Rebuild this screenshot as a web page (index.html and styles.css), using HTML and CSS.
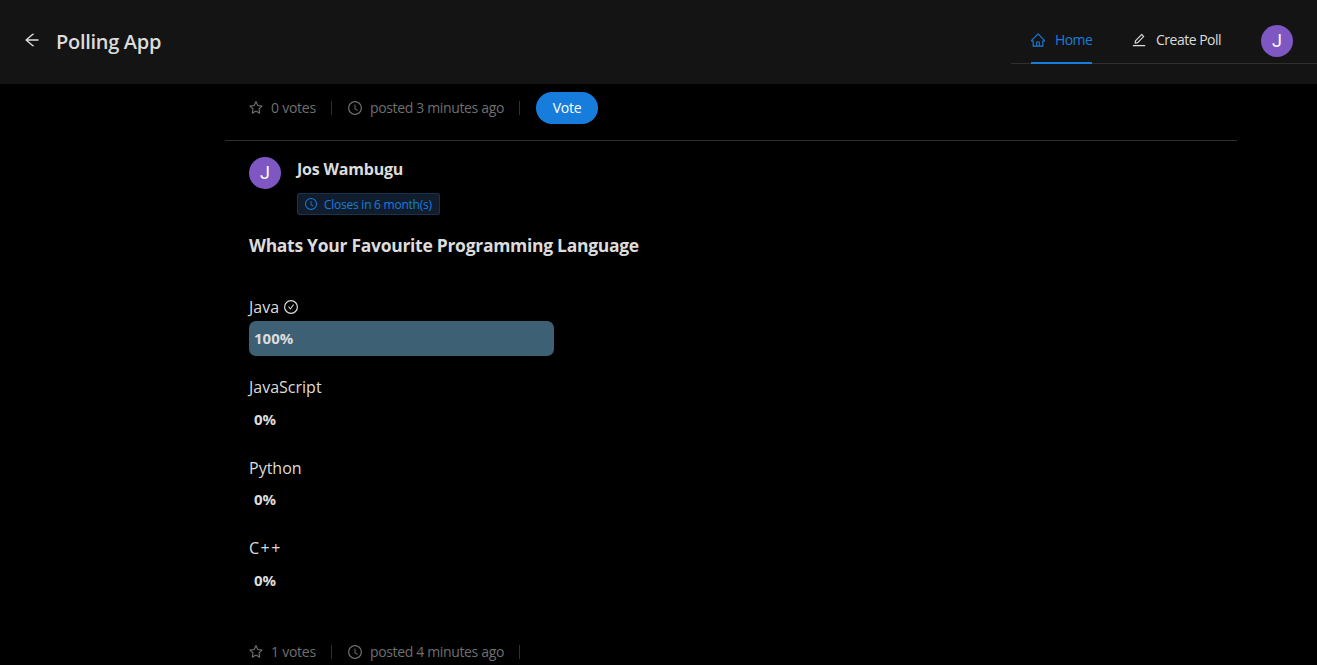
FILE: index.html
```html
<!DOCTYPE html>
<html lang="en">
<head>
<meta charset="utf-8">
<title>Polling App</title>
<link rel="stylesheet" href="styles.css">
</head>
<body>
<svg class="sprite" aria-hidden="true">
  <symbol id="arrow" viewBox="64 64 896 896"><path d="M872 474H286.9l350.2-304c5.6-4.9 2.2-14-5.2-14h-88.5c-3.9 0-7.6 1.4-10.5 3.9L155 487.8a31.96 31.96 0 000 48.3L535.1 866c1.5 1.3 3.3 2 5.2 2h91.5c7.4 0 10.8-9.2 5.2-14L286.9 550H872c4.4 0 8-3.6 8-8v-60c0-4.4-3.6-8-8-8z"/></symbol>
  <symbol id="home" viewBox="64 64 896 896"><path d="M946.5 505L560.1 118.8l-25.9-25.9a31.5 31.5 0 00-44.4 0L77.5 505a63.9 63.9 0 00-18.8 46c.4 35.2 29.7 63.3 64.9 63.3h42.5V940h691.8V614.3h43.4c17.1 0 33.2-6.7 45.3-18.8a63.6 63.6 0 0018.7-45.3c0-17-6.7-33.1-18.8-45.2zM568 868H456V664h112v204zm217.9-325.7V868H632V640c0-22.1-17.9-40-40-40H432c-22.1 0-40 17.9-40 40v228H238.1V542.3h-96l370-369.7 23.1 23.1L882 542.3h-96.1z"/></symbol>
  <symbol id="edit" viewBox="64 64 896 896"><path d="M257.7 752c2 0 4-.2 6-.5L431.9 722c2-.4 3.9-1.3 5.3-2.8l423.9-423.9a9.96 9.96 0 000-14.1L694.9 114.9c-1.9-1.9-4.4-2.9-7.1-2.9s-5.2 1-7.1 2.9L256.8 538.8c-1.5 1.5-2.4 3.3-2.8 5.3l-29.5 168.2a33.5 33.5 0 009.4 29.8c6.6 6.4 14.9 9.9 23.8 9.9zm67.4-174.4L687.8 215l73.3 73.3-362.7 362.6-88.9 15.7 15.6-89zM880 836H144c-17.7 0-32 14.3-32 32v36c0 4.4 3.6 8 8 8h784c4.4 0 8-3.6 8-8v-36c0-17.7-14.3-32-32-32z"/></symbol>
  <symbol id="star" viewBox="64 64 896 896"><path d="M908.1 353.1l-253.9-36.9L540.7 86.1c-3.1-6.3-8.2-11.4-14.5-14.5-15.8-7.8-35-1.3-42.9 14.5L369.8 316.2l-253.9 36.9c-7 1-13.4 4.3-18.3 9.3a32.05 32.05 0 00.6 45.3l183.7 179.1-43.4 252.9a31.95 31.95 0 0046.4 33.7L512 754l227.1 119.4c6.2 3.3 13.4 4.4 20.3 3.2 17.4-3 29.1-19.5 26.1-36.9l-43.4-252.9 183.7-179.1c5-4.9 8.3-11.3 9.3-18.3 2.7-17.5-9.5-33.7-27-36.3zM664.8 561.6l36.1 210.3L512 672.7 323.1 772l36.1-210.3-152.8-149L417.6 382 512 190.7 606.4 382l211.2 30.7-152.8 148.9z"/></symbol>
  <symbol id="clock" viewBox="64 64 896 896"><circle class="ring" cx="512" cy="512" r="410"/><path d="M686.7 638.6L544.1 535.5V288c0-4.4-3.6-8-8-8H488c-4.4 0-8 3.6-8 8v275.4c0 2.6 1.2 5 3.3 6.5l165.4 120.6c3.6 2.6 8.6 1.8 11.2-1.7l28.6-39c2.6-3.7 1.8-8.7-1.8-11.2z"/></symbol>
  <symbol id="check" viewBox="64 64 896 896"><circle class="ring" cx="512" cy="512" r="410"/><path d="M699 353h-46.9c-10.2 0-19.9 4.9-25.9 13.3L469 584.3l-71.2-98.8c-6-8.3-15.6-13.3-25.9-13.3H325c-6.5 0-10.3 7.4-6.5 12.7l124.6 172.8a31.8 31.8 0 0051.7 0l210.6-292c3.9-5.3.1-12.7-6.4-12.7z"/></symbol>
</svg>

<header class="header">
  <svg class="icon back"><use href="#arrow"/></svg>
  <h1 class="brand">Polling App</h1>
  <nav class="nav">
    <a class="nav-item home active"><svg class="icon"><use href="#home"/></svg><span class="home-label">Home</span></a>
    <a class="nav-item create"><svg class="icon"><use href="#edit"/></svg><span class="create-label">Create Poll</span></a>
    <span class="avatar nav-avatar">J</span>
  </nav>
</header>

<main class="list">
  <article class="poll first">
    <footer class="actions">
      <span class="action votes"><svg class="icon"><use href="#star"/></svg><span class="votes-label">0 votes</span></span>
      <span class="action posted"><svg class="icon"><use href="#clock"/></svg><span class="posted-label">posted 3 minutes ago</span></span>
      <button class="vote">Vote</button>
    </footer>
  </article>
  <article class="poll">
    <div class="meta">
      <span class="avatar">J</span>
      <div class="author">
        <h4 class="name">Jos Wambugu</h4>
        <span class="tag"><svg class="icon small"><use href="#clock"/></svg><span class="tag-label">Closes in 6 month(s)</span></span>
      </div>
    </div>
    <h3 class="question">Whats Your Favourite Programming Language</h3>
    <section class="choices">
      <div class="choice">
        <div class="choice-name"><span>Java</span><svg class="icon"><use href="#check"/></svg></div>
        <div class="bar winner" style="width: 100%"><span>100%</span></div>
      </div>
      <div class="choice">
        <div class="choice-name"><span>JavaScript</span></div>
        <div class="bar"><span>0%</span></div>
      </div>
      <div class="choice">
        <div class="choice-name"><span>Python</span></div>
        <div class="bar"><span>0%</span></div>
      </div>
      <div class="choice">
        <div class="choice-name"><span class="cpp">C++</span></div>
        <div class="bar"><span>0%</span></div>
      </div>
    </section>
    <footer class="actions">
      <span class="action votes"><svg class="icon"><use href="#star"/></svg><span class="votes-label">1 votes</span></span>
      <span class="action posted"><svg class="icon"><use href="#clock"/></svg><span class="posted-label">posted 4 minutes ago</span></span>
    </footer>
  </article>
</main>
</body>
</html>
```
FILE: styles.css
```css
* { box-sizing: border-box; }
body {
  margin: 0;
  height: 665px;
  overflow: hidden;
  background: #000;
  color: #dcdcdc;
  font: 14px/22px "Open Sans", "Noto Sans", sans-serif;
}
h1, h3, h4 { margin: 0; }
.sprite { display: none; }
.icon { width: 14px; height: 14px; flex: none; fill: currentColor; }
.icon.small { width: 12px; height: 12px; }
.ring { fill: none; stroke: currentColor; stroke-width: 76; }

.header {
  display: flex;
  align-items: flex-start;
  height: 84px;
  padding-left: 24px;
  background: #141414;
}
.icon.back { width: 16px; height: 16px; margin-top: 32px; }
.brand {
  margin: 26px 0 0 16px;
  font-size: 20px;
  line-height: 32px;
  font-weight: 600;
  letter-spacing: -0.3px;
}
.nav {
  display: flex;
  gap: 40px;
  width: 306px;
  height: 64px;
  margin-left: auto;
  padding-left: 20px;
  border-bottom: 1px solid #303030;
}
.nav-item {
  display: flex;
  align-items: center;
  gap: 10px;
  height: 64px;
  padding-top: 16px;
  border-bottom: 2px solid transparent;
}
.nav-item.home { width: 61px; }
.nav-item.create { width: 90px; }
.nav-item .icon { margin-top: 1px; }
.nav-item span { padding-top: 2px; }
.home-label { letter-spacing: -0.6px; }
.create-label { letter-spacing: -0.5px; }
.nav-item.active { color: #177ddc; border-color: #177ddc; }
.avatar {
  display: flex;
  align-items: center;
  justify-content: center;
  width: 32px;
  height: 32px;
  flex: none;
  border-radius: 50%;
  background: #7e57c2;
  color: #fff;
  font-family: Roboto, sans-serif;
  font-size: 18px;
}
.nav-avatar { margin-top: 25px; margin-left: -1px; }

.list { width: 1012px; margin-left: 225px; }
.poll { padding: 16px 24px; }
.poll.first { padding-top: 8px; border-bottom: 1px solid #303030; }
.actions {
  display: flex;
  align-items: center;
  height: 32px;
  color: #6f6f6f;
}
.action {
  display: flex;
  align-items: center;
  gap: 8px;
}
.action::after {
  content: "";
  width: 1px;
  height: 14px;
  margin-left: auto;
  background: #303030;
}
.votes { width: 83px; }
.votes-label { letter-spacing: -0.25px; }
.posted { width: 172px; margin-left: 16px; }
.posted-label { letter-spacing: -0.35px; }
.vote {
  width: 62px;
  height: 32px;
  margin-left: 16px;
  padding: 0;
  border: 0;
  border-radius: 16px;
  background: #177ddc;
  color: #fff;
  font: inherit;
  letter-spacing: -0.3px;
}
.meta { display: flex; gap: 16px; height: 58px; }
.name {
  height: 36px;
  font-size: 16px;
  line-height: 25px;
  font-weight: 700;
  letter-spacing: -0.2px;
}
.tag {
  display: flex;
  align-items: center;
  gap: 7px;
  width: 143px;
  height: 22px;
  padding-left: 7px;
  border: 1px solid #153450;
  border-radius: 2px;
  background: #111d2c;
  color: #177ddc;
  font-size: 12px;
  line-height: 20px;
}
.tag-label { padding-top: 2px; letter-spacing: -0.25px; }
.question {
  margin-top: 16px;
  font-size: 17.5px;
  line-height: 28px;
  font-weight: 700;
  letter-spacing: -0.29px;
}
.choices { width: 305px; margin-top: 36px; }
.choice { height: 80.5px; }
.choice-name {
  display: flex;
  align-items: center;
  gap: 5px;
  height: 26px;
  padding-bottom: 3px;
  font-size: 16px;
}
.cpp { letter-spacing: 1.5px; }
.bar {
  display: flex;
  align-items: center;
  height: 35px;
  padding-left: 5px;
  border-radius: 7px;
  font-size: 15px;
  font-weight: 700;
}
.bar span { padding-bottom: 1px; }
.bar.winner { background: #3d6075; }
.choices + .actions { margin-top: 19px; }
.tag-label, .votes-label, .posted-label, .home-label, .create-label { white-space: nowrap; }
```
